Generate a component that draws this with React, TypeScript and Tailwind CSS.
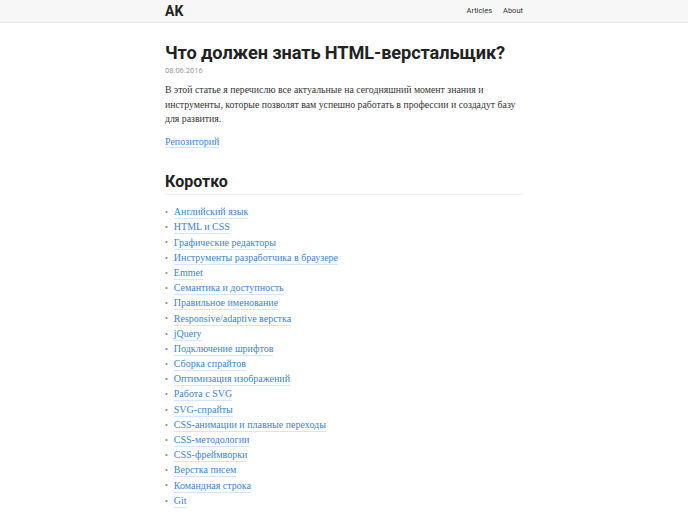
import React from "react";

const items = [
  "Английский язык",
  "HTML и CSS",
  "Графические редакторы",
  "Инструменты разработчика в браузере",
  "Emmet",
  "Семантика и доступность",
  "Правильное именование",
  "Responsive/adaptive верстка",
  "jQuery",
  "Подключение шрифтов",
  "Сборка спрайтов",
  "Оптимизация изображений",
  "Работа с SVG",
  "SVG-спрайты",
  "CSS-анимации и плавные переходы",
  "CSS-методологии",
  "CSS-фреймворки",
  "Верстка писем",
  "Командная строка",
  "Git",
];

const serif = "font-['Liberation_Serif',serif]";
const sans = "font-['Roboto',sans-serif]";

export default function App() {
  return (
    <div className="h-[512px] overflow-hidden bg-white">
      <header className="h-[23px] border-b border-[#e9e9e9] bg-[#f7f7f7]">
        <div className={`mx-auto flex h-full w-[358px] items-center justify-between ${sans}`}>
          <span className="text-[14px] font-bold text-[#222]">AK</span>
          <nav className="flex gap-[11px] text-[7.5px] text-[#333]">
            <a>Articles</a>
            <a>About</a>
          </nav>
        </div>
      </header>

      <main className="mx-auto w-[358px] pt-[18px]">
        <h1
          className={`${sans} text-[18.2px] font-bold leading-[24px] tracking-[-0.1px] text-[#222]`}
        >
          Что должен знать HTML-верстальщик?
        </h1>
        <div className={`${sans} mt-[1px] text-[7.5px] leading-[10px] text-[#999]`}>08.06.2016</div>

        <p className={`${serif} mt-[7px] text-[9.8px] leading-[14.7px] text-[#333]`}>
          В этой статье я перечислю все актуальные на сегодняшний момент знания и инструменты,
          которые позволят вам успешно работать в профессии и создадут базу для развития.
        </p>

        <p className={`${serif} mt-[7px] text-[10px] leading-[15px]`}>
          <a className="border-b border-[#d6e6f7] text-[#3a85d4]">Репозиторий</a>
        </p>

        <h2
          className={`${sans} mt-[22px] border-b border-[#eeeeee] pb-[1px] text-[16px] font-bold leading-[22px] text-[#222]`}
        >
          Коротко
        </h2>

        <ul className={`${serif} mt-[10px] text-[10px] leading-[15.2px]`}>
          {items.map((t) => (
            <li key={t} className="flex h-[15.2px] items-center">
              <span className="mr-[6px] text-[8px] text-[#888]">•</span>
              <a className="border-b border-[#d6e6f7] leading-[12px] text-[#3a85d4]">{t}</a>
            </li>
          ))}
        </ul>
      </main>
    </div>
  );
}
